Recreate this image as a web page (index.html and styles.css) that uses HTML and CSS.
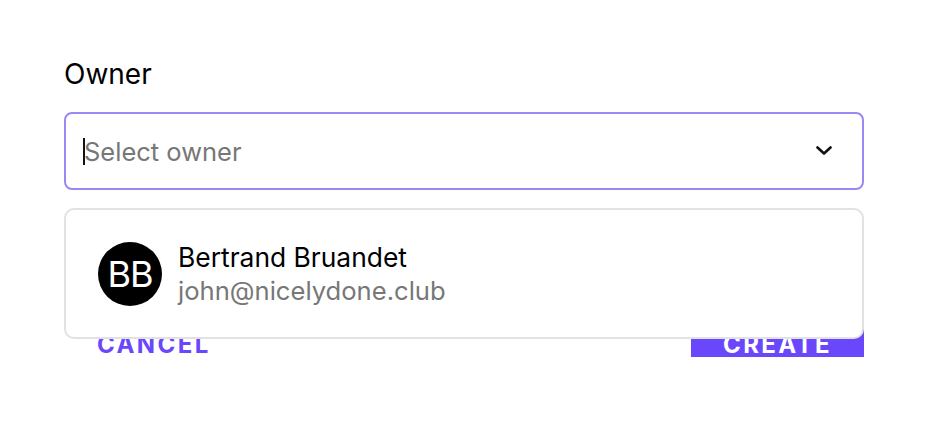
FILE: index.html
```html
<!DOCTYPE html>
<html>
<head>
<meta charset="utf-8">
<link rel="stylesheet" href="styles.css">
</head>
<body>
<div class="form">
  <div class="label">Owner</div>
  <div class="field">
    <div class="select">
      <span class="caret"></span><span class="placeholder">Select owner</span>
      <svg class="chevron" width="16" height="10" viewBox="0 0 16 10"><path d="M1.5 1.5 L8 7.5 L14.5 1.5" fill="none" stroke="#111" stroke-width="2.6" stroke-linecap="round" stroke-linejoin="round"/></svg>
    </div>
    <div class="menu">
      <div class="option">
        <div class="avatar">BB</div>
        <div class="info">
          <div class="name">Bertrand Bruandet</div>
          <div class="email">john@nicelydone.club</div>
        </div>
      </div>
    </div>
  </div>
  <div class="actions">
    <button class="btn cancel">CANCEL</button>
    <button class="btn create">CREATE</button>
  </div>
</div>
</body>
</html>
```
FILE: styles.css
```css
html, body { margin: 0; padding: 0; background: #fff; }
body { font-family: Inter, "Noto Sans", sans-serif; color: #000; min-height: 421px; }
.form { width: 800px; padding: 56px 0 0 64px; }
.label { font-size: 28px; line-height: 36px; margin-bottom: 20px; }
.field { position: relative; }
.select {
  height: 78px; box-sizing: border-box;
  border: 2px solid #9c88f2; border-radius: 8px;
  display: flex; align-items: center;
  padding: 0 30px 0 17px;
}
.caret { width: 2px; height: 27px; background: #111; margin-right: -1px; }
.placeholder { font-size: 25.5px; color: #777; flex: 1; }
.chevron { display: block; }
.menu {
  position: absolute; left: 0; right: 0; top: 96px;
  background: #fff; border: 2px solid #e2e2e2; border-radius: 10px;
  box-sizing: border-box; height: 131px;
  display: flex; align-items: center; z-index: 2;
}
.option { display: flex; align-items: center; padding-left: 32px; gap: 16px; }
.avatar {
  width: 64px; height: 64px; border-radius: 50%; background: #000; color: #fff;
  display: flex; align-items: center; justify-content: center;
  font-size: 36px; letter-spacing: -1px;
}
.info { line-height: 34px; }
.name { color: #000; font-size: 26.4px; }
.email { color: #777; font-size: 25.6px; }
.actions { display: flex; justify-content: space-between; margin-top: 119px; }
.btn {
  font-family: Inter, "Noto Sans", sans-serif; font-weight: 700; font-size: 24px;
  line-height: 1; letter-spacing: 2.4px; border: none; height: 48px; box-sizing: border-box;
  display: flex; align-items: flex-end; padding: 0; cursor: pointer;
}
.cancel { background: transparent; color: #6b47fc; padding-left: 33px; }
.create { background: #6b47fc; color: #fff; width: 173px; justify-content: center; }
```
